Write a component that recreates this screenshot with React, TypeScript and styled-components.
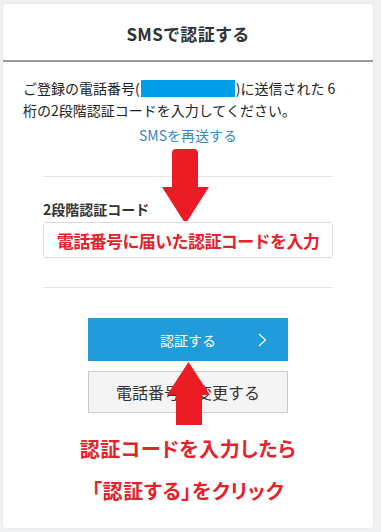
import styled, { createGlobalStyle } from 'styled-components'

const GlobalStyle = createGlobalStyle`
  html, body {
    margin: 0;
    padding: 0;
    background: #eff0f2;
    font-family: "Noto Sans CJK JP", "Noto Sans", sans-serif;
    color: #333;
  }
`

const Page = styled.div`
  padding: 4px 8px 4px 3px;
  height: 532px;
  box-sizing: border-box;
`

const Card = styled.div`
  position: relative;
  width: 370px;
  height: 524px;
  background: #fff;
  border-radius: 3px;
  box-shadow: 0 0 2px rgba(0, 0, 0, 0.08);
  overflow: hidden;
`

const Header = styled.div`
  height: 56px;
  display: flex;
  align-items: center;
  justify-content: center;
  border-bottom: 2px solid #9b9b9b;
  h1 {
    margin: 0;
    padding-top: 2px;
    font-size: 17px;
    font-weight: 700;
    color: #2f3338;
    letter-spacing: 0.3px;
  }
`

const Body = styled.div`
  padding: 15px 20px 0 20px;
`

const Lead = styled.p`
  margin: 0;
  font-size: 14px;
  line-height: 22px;
  color: #222;
`

const Masked = styled.span`
  display: inline-block;
  width: 94px;
  height: 17px;
  margin: 0 1px;
  vertical-align: -3px;
  background: #00a0e9;
`

const Resend = styled.a`
  display: block;
  margin-top: 3px;
  text-align: center;
  font-size: 14px;
  line-height: 22px;
  color: #3a86c2;
  text-decoration: none;
`

const Form = styled.div`
  margin: 30px 40px 0 40px;
  border-top: 1px solid #e6e6e6;
  border-bottom: 1px solid #e6e6e6;
  padding: 23px 0 29px;
`

const Label = styled.div`
  font-size: 14px;
  font-weight: 700;
  line-height: 19px;
  color: #333;
  margin-bottom: 3px;
`

const Input = styled.div`
  height: 34px;
  border: 1px solid #dcdcdc;
  border-radius: 3px;
  display: flex;
  align-items: center;
  justify-content: center;
  font-size: 17px;
  font-weight: 700;
  color: #e3222b;
  letter-spacing: -0.6px;
`

const Actions = styled.div`
  display: flex;
  flex-direction: column;
  align-items: center;
  gap: 10px;
  padding-top: 30px;
`

const Button = styled.button<{ $primary?: boolean }>`
  position: relative;
  width: 200px;
  height: ${({ $primary }) => ($primary ? '43px' : '42px')};
  box-sizing: border-box;
  display: flex;
  align-items: center;
  justify-content: center;
  font-family: inherit;
  font-size: ${({ $primary }) => ($primary ? '14px' : '16px')};
  color: ${({ $primary }) => ($primary ? '#fff' : '#333')};
  background: ${({ $primary }) => ($primary ? '#1f9cd9' : '#f4f4f4')};
  border: ${({ $primary }) => ($primary ? 'none' : '1px solid #c9c9c9')};
  padding: 0;
  cursor: pointer;
`

const Chevron = styled.svg`
  position: absolute;
  right: 21px;
  top: 15px;
`

const Note = styled.div`
  margin-top: 15px;
  text-align: center;
  font-size: 20px;
  font-weight: 700;
  line-height: 42px;
  color: #e3222b;
  font-feature-settings: 'palt';
  letter-spacing: 0.6px;
`

const Arrow = styled.svg<{ $left: number; $top: number }>`
  position: absolute;
  left: ${({ $left }) => $left}px;
  top: ${({ $top }) => $top}px;
`

export default function App() {
  return (
    <>
      <GlobalStyle />
      <Page>
        <Card>
          <Header>
            <h1>SMSで認証する</h1>
          </Header>
          <Body>
            <Lead>
              ご登録の電話番号(<Masked />)に送信された 6
              <br />
              桁の2段階認証コードを入力してください。
            </Lead>
            <Resend href="#">SMSを再送する</Resend>
          </Body>
          <Form>
            <Label>2段階認証コード</Label>
            <Input>電話番号に届いた認証コードを入力</Input>
          </Form>
          <Actions>
            <Button $primary>
              認証する
              <Chevron width="9" height="14" viewBox="0 0 9 14">
                <path d="M1 1 L7.5 7 L1 13" fill="none" stroke="#fff" strokeWidth="1.2" />
              </Chevron>
            </Button>
            <Button>電話番号を変更する</Button>
          </Actions>
          <Note>
            認証コードを入力したら
            <br />
            「認証する」をクリック
          </Note>
          <Arrow $left={159} $top={145} width="48" height="72" viewBox="0 0 48 72">
            <path
              d="M10 4 Q10 0 14 0 L32 0 Q36 0 36 4 L36 38 L47 38 L23.5 75 L0 38 L10 38 Z"
              fill="#ed1c24"
            />
          </Arrow>
          <Arrow $left={164} $top={358} width="44" height="63" viewBox="0 0 44 63">
            <path d="M21.5 0 L43 33 L35 33 L35 63 L9 63 L9 33 L0 33 Z" fill="#ed1c24" />
          </Arrow>
        </Card>
      </Page>
    </>
  )
}
